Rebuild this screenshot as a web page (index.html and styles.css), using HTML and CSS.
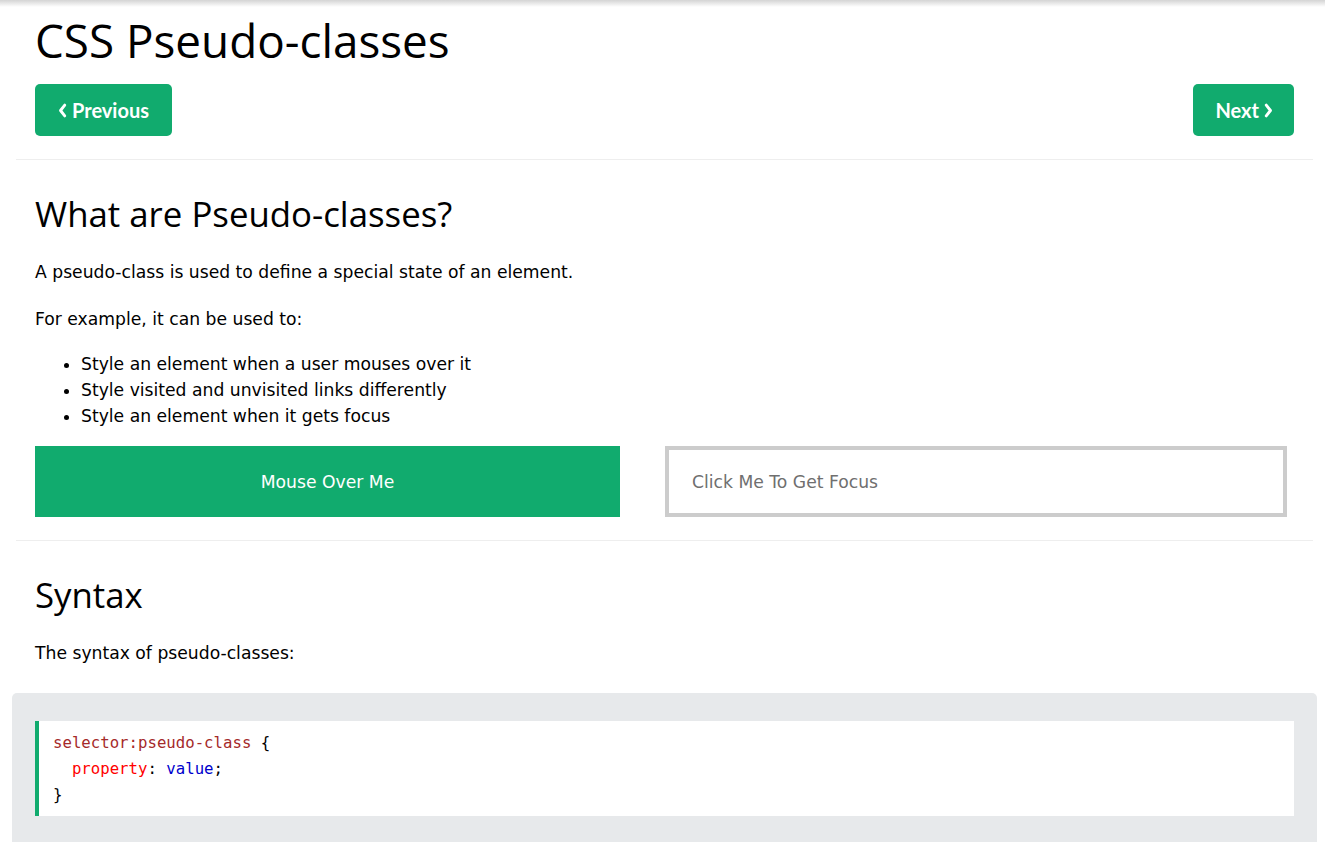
FILE: index.html
```html
<!DOCTYPE html>
<html lang="en">
<head>
<meta charset="utf-8">
<title>CSS Pseudo-classes</title>
<link rel="stylesheet" href="styles.css">
</head>
<body>
<div class="topshadow"></div>
<main class="main">
  <section class="sec intro">
    <h1 class="title">CSS Pseudo-classes</h1>
    <div class="nav">
      <a class="btn prev" href="#"><svg class="chev" viewBox="0 0 10 16" width="9" height="15"><path d="M7.5 2 L2.8 8 L7.5 14" fill="none" stroke="#fff" stroke-width="3.2" stroke-linecap="round" stroke-linejoin="round"/></svg>Previous</a>
      <a class="btn next" href="#">Next<svg class="chev" viewBox="0 0 10 16" width="9" height="15"><path d="M2.5 2 L7.2 8 L2.5 14" fill="none" stroke="#fff" stroke-width="3.2" stroke-linecap="round" stroke-linejoin="round"/></svg></a>
    </div>
  </section>
  <hr class="rule">
  <section class="sec">
    <h2 class="heading first">What are Pseudo-classes?</h2>
    <p class="text p1">A pseudo-class is used to define a special state of an element.</p>
    <p class="text p2">For example, it can be used to:</p>
    <ul class="list">
      <li>Style an element when a user mouses over it</li>
      <li>Style visited and unvisited links differently</li>
      <li>Style an element when it gets focus</li>
    </ul>
    <div class="demo">
      <div class="hoverbox">Mouse Over Me</div>
      <input class="focusbox" type="text" placeholder="Click Me To Get Focus">
    </div>
  </section>
  <hr class="rule">
  <section class="sec">
    <h2 class="heading second">Syntax</h2>
    <p class="text p3">The syntax of pseudo-classes:</p>
  </section>
  <div class="codebox">
    <div class="code"><span class="sel">selector:pseudo-class</span> {<br>&nbsp;&nbsp;<span class="prop">property</span>: <span class="val">value</span>;<br>}</div>
  </div>
</main>
</body>
</html>
```
FILE: styles.css
```css
html, body {
  margin: 0;
  padding: 0;
  background: #fff;
}
body {
  font-family: "DejaVu Sans", Verdana, sans-serif;
  font-size: 17.2px;
  color: #000;
  overflow: hidden;
}
.topshadow {
  height: 7px;
  background: linear-gradient(#d4d4d4, #ffffff);
}
.main {
  padding: 0 12px 0 16px;
}
.sec {
  padding: 0 19px;
}
.title {
  font-family: "Open Sans", "Noto Sans", sans-serif;
  font-weight: 400;
  font-size: 45.8px;
  line-height: 56px;
  margin: 5px 0 0 0;
}
.nav {
  display: flex;
  justify-content: space-between;
  margin-top: 16px;
}
.btn {
  display: flex;
  align-items: center;
  gap: 5px;
  height: 52px;
  box-sizing: border-box;
  background: #11ab6e;
  color: #fff;
  border-radius: 5px;
  text-decoration: none;
  font-family: "Lato", "Open Sans", sans-serif;
  font-weight: 700;
  font-size: 20px;
}
.btn.prev { padding: 0 23px 0 23px; }
.btn.next { padding: 0 21px 0 22px; }
.rule {
  border: 0;
  border-top: 1px solid #eeeeee;
  margin: 23px 0 0 0;
  height: 0;
}
.heading {
  font-family: "Open Sans", "Noto Sans", sans-serif;
  font-weight: 400;
  font-size: 34.8px;
  line-height: 43px;
  margin: 0;
}
.heading.first { margin-top: 32px; }
.heading.second { margin-top: 32px; }
.text {
  line-height: 26px;
  margin: 0;
}
.p1 { margin-top: 24px; }
.p2 { margin-top: 21px; }
.p3 { margin-top: 24px; }
.list {
  margin: 19px 0 0 0;
  padding-left: 46px;
  line-height: 26px;
}
.demo {
  display: flex;
  gap: 45px;
  margin-top: 17px;
}
.hoverbox {
  width: 585px;
  height: 71px;
  background: #11ab6e;
  color: #fff;
  display: flex;
  align-items: center;
  justify-content: center;
  font-size: 17.2px;
}
.focusbox {
  width: 622px;
  height: 71px;
  box-sizing: border-box;
  border: 4px solid #cccccc;
  padding: 0 23px;
  font-family: "DejaVu Sans", Verdana, sans-serif;
  font-size: 17.2px;
  outline: none;
  margin: 0;
}
.focusbox::placeholder {
  color: #6f6f6f;
}
.codebox {
  margin: 27px -4px 0 -4px;
  background: #E7E9EB;
  border-radius: 5px;
  padding: 28px 23px 40px 23px;
}
.code {
  background: #fff;
  border-left: 4px solid #11ab6e;
  padding: 9px 14px 8px 14px;
  font-family: "DejaVu Sans Mono", "Liberation Mono", monospace;
  font-size: 15.7px;
  line-height: 26px;
  color: #000;
}
.sel { color: #a52a2a; }
.prop { color: #ff0000; }
.val { color: #0000cd; }
```
